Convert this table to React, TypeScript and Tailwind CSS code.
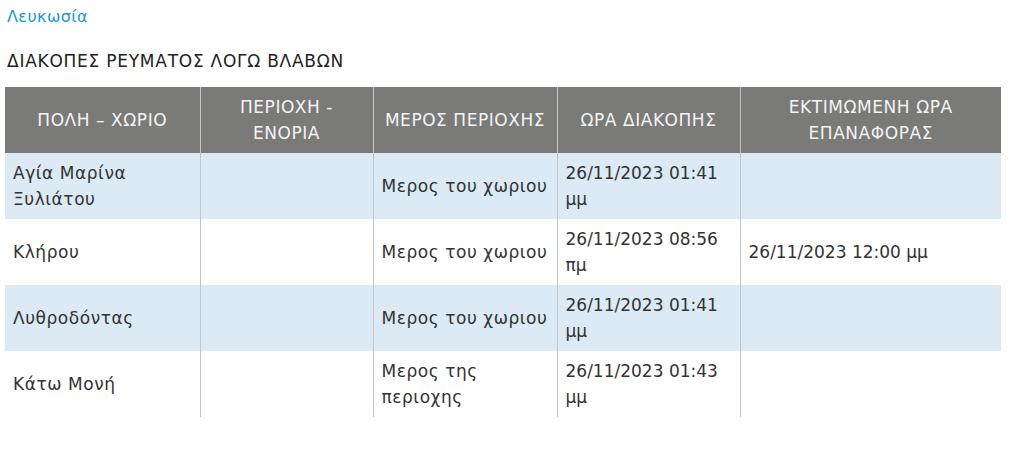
const rows = [
  { city: "Αγία Μαρίνα Ξυλιάτου", area: "", part: "Μερος του χωριου", start: "26/11/2023 01:41 μμ", end: "" },
  { city: "Κλήρου", area: "", part: "Μερος του χωριου", start: "26/11/2023 08:56 πμ", end: "26/11/2023 12:00 μμ" },
  { city: "Λυθροδόντας", area: "", part: "Μερος του χωριου", start: "26/11/2023 01:41 μμ", end: "" },
  { city: "Κάτω Μονή", area: "", part: "Μερος της περιοχης", start: "26/11/2023 01:43 μμ", end: "" },
];

const headers = ["ΠΟΛΗ – ΧΩΡΙΟ", "ΠΕΡΙΟΧΗ - ΕΝΟΡΙΑ", "ΜΕΡΟΣ ΠΕΡΙΟΧΗΣ", "ΩΡΑ ΔΙΑΚΟΠΗΣ", "ΕΚΤΙΜΩΜΕΝΗ ΩΡΑ ΕΠΑΝΑΦΟΡΑΣ"];

export default function App() {
  return (
    <div className="min-h-screen bg-white pl-[5px] pt-[6px] font-['DejaVu_Sans',sans-serif] text-[#333]">
      <div className="pl-[2px] text-[16px] leading-[22px] tracking-[0.4px] text-[#1a98d5]">Λευκωσία</div>
      <div className="mt-[22px] pl-[2px] text-[17px] leading-[22px] tracking-[0.75px] text-[#222]">
        ΔΙΑΚΟΠΕΣ ΡΕΥΜΑΤΟΣ ΛΟΓΩ ΒΛΑΒΩΝ
      </div>
      <table className="mt-[15px] w-[996px] table-fixed border-collapse text-[17px] leading-[26px] tracking-[0.55px]">
        <colgroup>
          <col className="w-[195px]" />
          <col className="w-[173px]" />
          <col className="w-[184px]" />
          <col className="w-[183px]" />
          <col className="w-[261px]" />
        </colgroup>
        <thead>
          <tr className="h-[66px] bg-[#7a7a78] text-[#f4f4f4]">
            {headers.map((h, i) => (
              <th
                key={h}
                className={`px-[8px] py-[7px] text-center align-middle font-normal ${i > 0 ? "border-l border-[#c4c4c4]" : ""}`}
              >
                {h}
              </th>
            ))}
          </tr>
        </thead>
        <tbody>
          {rows.map((r, idx) => (
            <tr key={r.city} className={`h-[66px] ${idx % 2 === 0 ? "bg-[#dbeaf5]" : "bg-white"}`}>
              <td className="px-[8px] py-[7px] align-middle">{r.city}</td>
              <td className="border-l border-[#c4c4c4] px-[8px] py-[7px] align-middle">{r.area}</td>
              <td className="border-l border-[#c4c4c4] px-[8px] py-[7px] align-middle">{r.part}</td>
              <td className="border-l border-[#c4c4c4] px-[8px] py-[7px] align-middle tracking-normal">{r.start}</td>
              <td className="border-l border-[#c4c4c4] px-[8px] py-[7px] align-middle tracking-normal">{r.end}</td>
            </tr>
          ))}
        </tbody>
      </table>
    </div>
  );
}
